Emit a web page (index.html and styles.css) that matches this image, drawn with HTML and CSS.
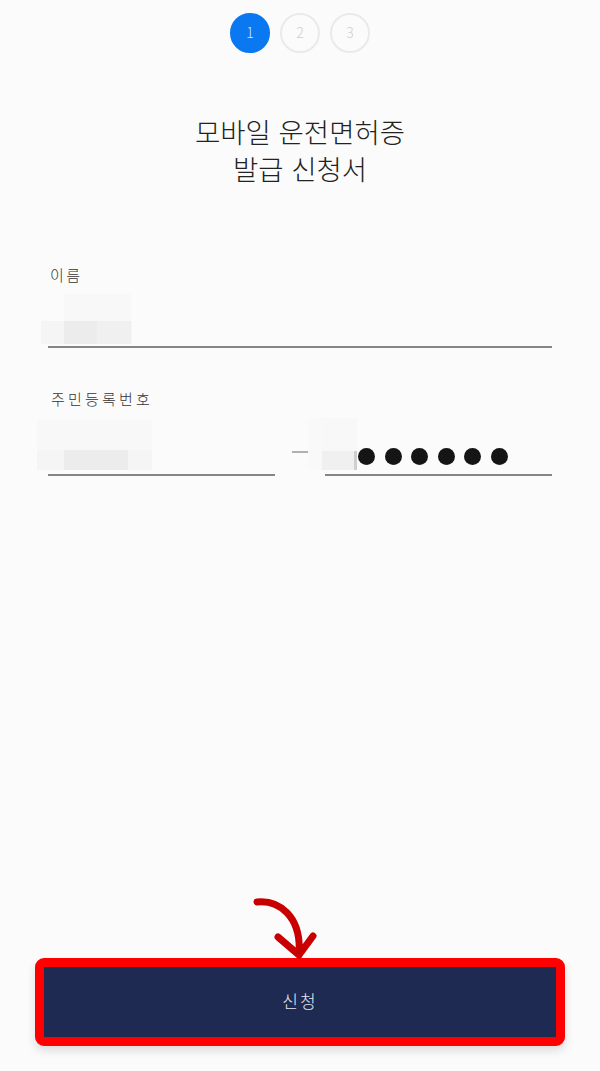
FILE: index.html
```html
<!DOCTYPE html>
<html lang="ko">
<head>
<meta charset="utf-8">
<title>모바일 운전면허증 발급 신청서</title>
<link rel="stylesheet" href="styles.css">
</head>
<body>
<main class="app">
  <div class="steps">
    <span class="step step-active">1</span>
    <span class="step">2</span>
    <span class="step">3</span>
  </div>
  <h1 class="title">모바일 운전면허증<br>발급 신청서</h1>
  <section class="form">
    <div class="field field-name">
      <div class="label label-name">이름</div>
      <div class="input">
        <div class="mosaic mosaic-name">
          <i class="c c-0"></i><i class="c c-1"></i><i class="c c-1"></i><i class="c c-0"></i>
          <i class="c c-2"></i><i class="c c-4"></i><i class="c c-3"></i><i class="c c-2"></i>
        </div>
      </div>
    </div>
    <div class="field field-id">
      <div class="label label-id">주민등록번호</div>
      <div class="id-row">
        <div class="input input-half">
          <div class="mosaic mosaic-id">
            <i class="c c-1"></i><i class="c c-1"></i><i class="c c-1"></i><i class="c c-1"></i>
            <i class="c c-2"></i><i class="c c-4"></i><i class="c c-4"></i><i class="c c-2"></i>
          </div>
        </div>
        <div class="dash"></div>
        <div class="input input-half input-back">
          <div class="mosaic mosaic-back">
            <i class="c c-faint"></i><i class="c c-1"></i><i class="c c-1"></i>
            <i class="c c-faint"></i><i class="c c-3"></i><i class="c c-5"></i>
          </div>
          <div class="dots"><i></i><i></i><i></i><i></i><i></i><i></i></div>
        </div>
      </div>
    </div>
  </section>
  <footer class="footer">
    <svg class="arrow" viewBox="0 0 70 64" width="70" height="64" aria-hidden="true">
      <path d="M7 5C28 3 52 18 49 58M28 40L49 58L63 39" fill="none" stroke="#c90000" stroke-width="7" stroke-linecap="round" stroke-linejoin="round"/>
    </svg>
    <button class="submit" type="button">신청</button>
  </footer>
</main>
</body>
</html>
```
FILE: styles.css
```css
* { box-sizing: border-box; }
html, body { margin: 0; padding: 0; }
body {
  background: #fbfbfb;
  font-family: "Noto Sans CJK KR", "Noto Sans", sans-serif;
  font-weight: 300;
  color: #1b1b1b;
}
.app {
  height: 1071px;
  display: flex;
  flex-direction: column;
  overflow: hidden;
}
.steps {
  display: flex;
  justify-content: center;
  gap: 10px;
  padding-top: 13px;
}
.step {
  width: 40px;
  height: 40px;
  border-radius: 50%;
  border: 2px solid #eaeaea;
  display: flex;
  align-items: center;
  justify-content: center;
  padding-bottom: 3px;
  font-size: 14px;
  font-weight: 200;
  color: #cfcfcf;
}
.step-active {
  background: #0a78f0;
  border-color: #0a78f0;
  color: #d5e6fb;
}
.title {
  margin: 60px 0 0;
  font-size: 27.5px;
  line-height: 37px;
  font-weight: 300;
  text-align: center;
  color: #222;
}
.form {
  margin-top: 77px;
  padding: 0 48px;
}
.label {
  font-size: 15px;
  line-height: 22px;
  color: #333;
}
.label-name { padding-left: 2px; letter-spacing: 2.5px; }
.label-id { padding-left: 3px; letter-spacing: 3.2px; }
.field-name .input { height: 54px; margin-top: 8px; }
.field-id { margin-top: 40px; }
.id-row {
  display: flex;
  align-items: flex-end;
  justify-content: space-between;
  margin-top: 10px;
}
.input {
  position: relative;
  border-bottom: 2px solid #858585;
}
.input-half { width: 227px; height: 56px; }
.dash {
  width: 16px;
  height: 2px;
  background: #b0b0b0;
  margin-bottom: 23px;
}
.mosaic {
  position: absolute;
  display: grid;
}
.mosaic-name {
  left: -7px;
  top: 0;
  width: 91px;
  height: 50px;
  grid-template-columns: 23px 33px 34px 1px;
  grid-template-rows: 27px 23px;
}
.mosaic-id {
  left: -11px;
  top: 0;
  width: 115px;
  height: 50px;
  grid-template-columns: 27px 32px 32px 24px;
  grid-template-rows: 30px 20px;
}
.mosaic-back {
  left: -17px;
  top: -2px;
  width: 49px;
  height: 52px;
  grid-template-columns: 14px 32px 3px;
  grid-template-rows: 33px 19px;
}
.c { display: block; }
.c-0 { background: #fbfbfb; }
.c-faint { background: #f9f9f9; }
.c-1 { background: #f8f8f8; }
.c-2 { background: #f5f5f5; }
.c-3 { background: #f0f0f0; }
.c-4 { background: #ececec; }
.c-5 { background: #cfcfcf; }
.dots {
  position: absolute;
  left: 33px;
  bottom: 9.5px;
  display: flex;
  gap: 9.6px;
}
.dots i {
  display: block;
  width: 17px;
  height: 17px;
  border-radius: 50%;
  background: #151515;
}
.footer {
  position: relative;
  margin-top: auto;
  padding: 0 35px 25px;
}
.arrow {
  position: absolute;
  left: 250px;
  top: -61px;
}
.submit {
  display: block;
  width: 100%;
  height: 88px;
  border: 9px solid #ff0000;
  border-radius: 9px;
  padding-bottom: 4px;
  background: #1f2a52;
  color: #e6e8f0;
  font-family: inherit;
  font-size: 17px;
  font-weight: 300;
  letter-spacing: 2px;
  box-shadow: 0 5px 10px rgba(0, 0, 0, 0.12);
}
```
